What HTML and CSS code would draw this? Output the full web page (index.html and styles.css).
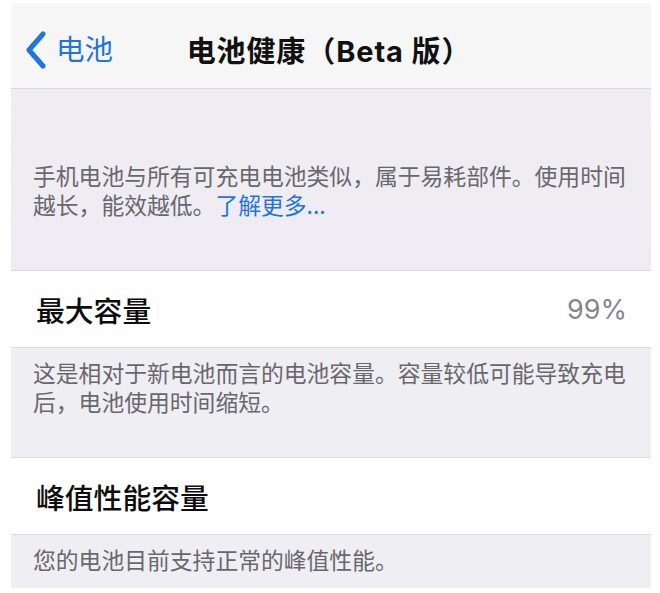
FILE: index.html
```html
<!DOCTYPE html>
<html lang="zh-CN">
<head>
<meta charset="utf-8">
<title>电池健康</title>
<link rel="stylesheet" href="styles.css">
</head>
<body>
<div class="screen">
  <header class="nav">
    <a class="back">
      <svg class="chev" width="22" height="38" viewBox="0 0 22 38"><path d="M18 3 L4 19 L18 35" fill="none" stroke="#1f74de" stroke-width="5" stroke-linecap="round" stroke-linejoin="round"/></svg>
      <span>电池</span>
    </a>
    <h1 class="title">电池健康（Beta 版）</h1>
  </header>
  <section class="footer intro">
    <p>手机电池与所有可充电电池类似，属于易耗部件。使用时间越长，能效越低。<span class="link">了解更多...</span></p>
  </section>
  <div class="row">
    <span class="label">最大容量</span>
    <span class="value">99%</span>
  </div>
  <section class="footer note">
    <p>这是相对于新电池而言的电池容量。容量较低可能导致充电后，电池使用时间缩短。</p>
  </section>
  <div class="row">
    <span class="label">峰值性能容量</span>
  </div>
  <section class="footer last">
    <p>您的电池目前支持正常的峰值性能。</p>
  </section>
</div>
</body>
</html>
```

FILE: styles.css
```css
html, body {
  margin: 0;
  padding: 0;
  background: #ffffff;
}
body {
  padding: 3px 9px 6px 11px;
  font-family: "Inter", "Noto Sans CJK SC", sans-serif;
}
.screen {
  display: flex;
  flex-direction: column;
  background: #efeef2;
}
.nav {
  position: relative;
  height: 85px;
  background: #f7f6f7;
  border-bottom: 1px solid #d9d8dc;
  display: flex;
  align-items: center;
}
.back {
  display: flex;
  align-items: center;
  gap: 9px;
  padding-left: 14px;
  padding-top: 8px;
  color: #1f74de;
  font-size: 28.5px;
  font-family: "Noto Sans CJK SC", sans-serif;
  line-height: 1;
}
.back span {
  margin-top: -2px;
}
.title {
  position: absolute;
  left: 0;
  right: 0;
  top: 0;
  bottom: 0;
  margin: 0;
  display: flex;
  align-items: center;
  justify-content: center;
  padding-top: 6px;
  padding-right: 4px;
  font-size: 29px;
  letter-spacing: 0.9px;
  font-weight: 700;
  color: #111;
  font-family: "Inter", "Noto Sans CJK SC", sans-serif;
}
.footer {
  color: #68676c;
  font-size: 22.8px;
  line-height: 29px;
  font-family: "Noto Sans CJK SC", sans-serif;
}
.footer p {
  margin: 0;
  padding: 0 20px 0 22px;
}
.intro {
  padding: 72px 0 51px;
  background: linear-gradient(#f0eef1, #eeebf3);
  border-bottom: 1px solid #dcdbe0;
}
.link {
  color: #1f74de;
}
.row {
  height: 76px;
  background: #fefefe;
  border-bottom: 1px solid #dad9dd;
  display: flex;
  align-items: center;
  justify-content: space-between;
  padding: 0 24px 0 25px;
}
.label {
  font-size: 28.8px;
  font-weight: 500;
  color: #0d0d0d;
  font-family: "Noto Sans CJK SC", sans-serif;
  margin-top: 1px;
}
.value {
  font-size: 27px;
  color: #86858a;
  font-family: "Inter", sans-serif;
}
.note {
  padding: 10px 0 41px;
  border-bottom: 1px solid #dcdbe0;
}
.last {
  padding: 10px 0 14px;
}
```
